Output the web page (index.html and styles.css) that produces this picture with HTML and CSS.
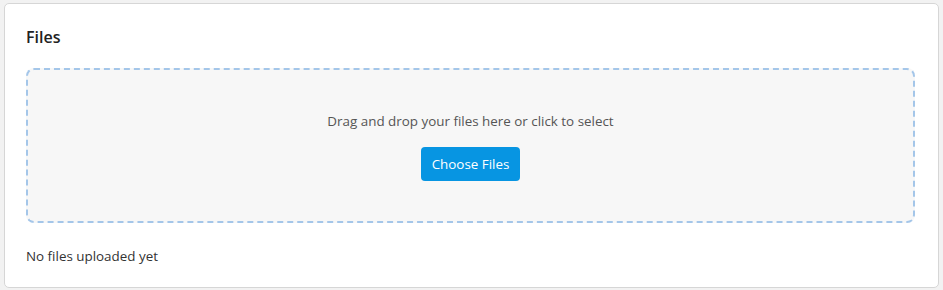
FILE: index.html
```html
<!DOCTYPE html>
<html lang="en">
<head>
    <meta charset="UTF-8">
    <meta name="viewport" content="width=device-width, initial-scale=1.0">
    <title>Files</title>
    <link rel="stylesheet" href="styles.css">
</head>
<body>
    <div class="card">
        <h2 class="card-title">Files</h2>

        <div class="dropzone">
            <p class="dropzone-text">Drag and drop your files here or click to select</p>
            <button class="btn" type="button">Choose Files</button>
        </div>

        <p class="file-list">No files uploaded yet</p>
    </div>
</body>
</html>
```

FILE: styles.css
```css
* {
    margin: 0;
    padding: 0;
    box-sizing: border-box;
}

body {
    background: #f2f2f2;
    padding: 3px 4px;
    font-family: 'Open Sans', 'Noto Sans', sans-serif;
    color: #333;
}

.card {
    width: 935px;
    height: 285px;
    background: white;
    border: 1px solid #d6d6d6;
    border-radius: 5px;
    padding: 22px 23px 20px 21px;
}

.card-title {
    font-size: 16px;
    font-weight: 600;
    line-height: 22px;
    color: #222;
    margin-bottom: 20px;
}

.dropzone {
    height: 155px;
    background: #f7f7f7;
    border: 2px dashed #a4c6e9;
    border-radius: 8px;
    display: flex;
    flex-direction: column;
    align-items: center;
    justify-content: center;
    gap: 17px;
    padding-top: 1px;
}

.dropzone-text {
    font-size: 13.4px;
    line-height: 18px;
    color: #555;
}

.btn {
    background: #0795e2;
    color: white;
    border: none;
    border-radius: 4px;
    font-family: 'Open Sans', 'Noto Sans', sans-serif;
    font-size: 13.4px;
    height: 34px;
    padding: 0 11px;
    cursor: pointer;
}

.file-list {
    margin-top: 24px;
    font-size: 13.4px;
    line-height: 18px;
    color: #333;
}
```
